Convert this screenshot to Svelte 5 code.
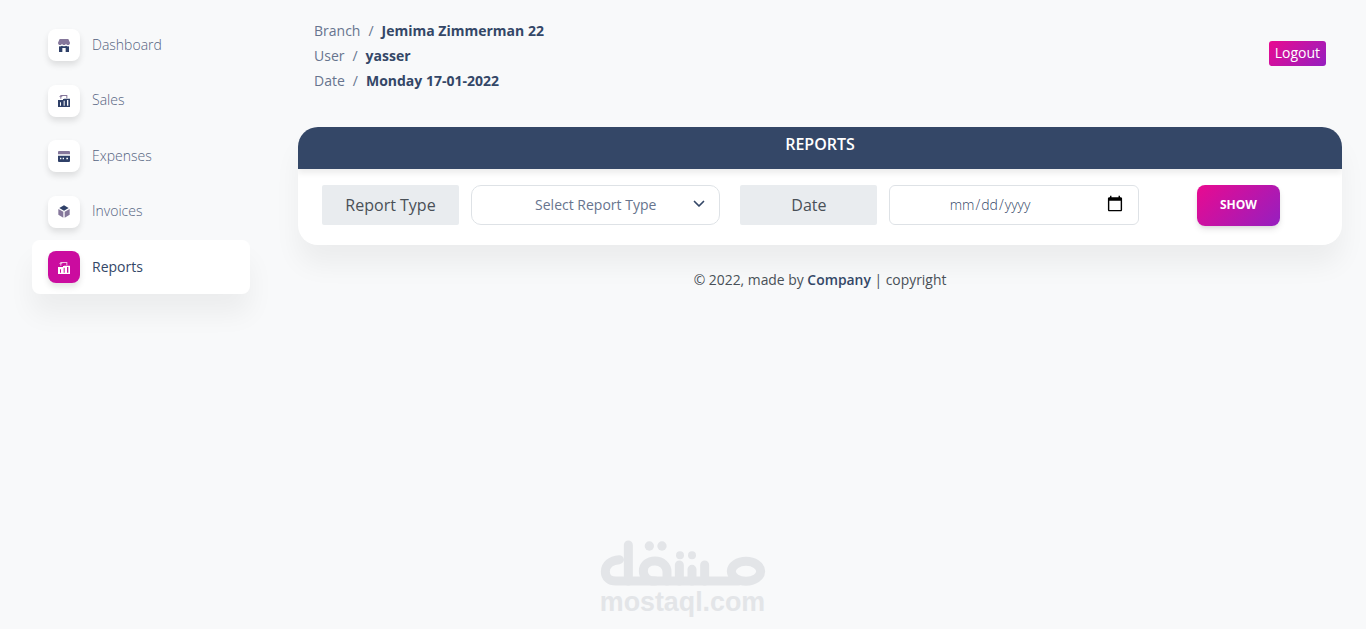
<script>
  const navItems = [
    { label: 'Dashboard', icon: 'shop' },
    { label: 'Sales', icon: 'chart' },
    { label: 'Expenses', icon: 'card' },
    { label: 'Invoices', icon: 'box' },
    { label: 'Reports', icon: 'chart', active: true }
  ];

  const crumbs = [
    { label: 'Branch', value: 'Jemima Zimmerman 22' },
    { label: 'User', value: 'yasser' },
    { label: 'Date', value: 'Monday 17-01-2022' }
  ];
</script>

<div class="page">
  <aside class="sidebar">
    <ul class="nav">
      {#each navItems as item}
        <li class="nav-item" class:active={item.active}>
          <span class="icon-box">
            <svg width="12" height="13" viewBox="0 0 36 39" fill="currentColor">
              {#if item.icon === 'shop'}
                <path class="soft" d="M5 0h26l5 11c0 5-3 7-6 7s-5-2-6-4c-1 2-3 4-6 4s-5-2-6-4c-1 2-3 4-6 4s-6-2-6-7z" />
                <path d="M3 22c3 1 6 0 9-2 3 2 9 2 12 0 3 2 6 3 9 2v17H23V27H13v12H3z" />
              {:else if item.icon === 'chart'}
                <path class="soft" d="M7 14V3h21v10h-3V6H10v8zM3 8l5.500-5 5.500 5z" />
                <path fill-rule="evenodd" d="M0 18h15v-3h3v-1h18v25H0zM6 25v10h3V25zM17 20v15h3V20zM27 18v17h4V18z" />
              {:else if item.icon === 'card'}
                <path class="soft" d="M3 3h30a3 3 0 0 1 3 3v7H0V6a3 3 0 0 1 3-3z" />
                <path fill-rule="evenodd" d="M0 17h36v16a3 3 0 0 1-3 3H3a3 3 0 0 1-3-3zM6 23v5h4v-5zM14 23v5h4v-5zM25 23v5h5v-5z" />
              {:else}
                <path d="M18 1l14 8-14 8-14-8z" />
                <path class="soft" d="M1 12l15 8.500V38L1 29.500zM35 12v17.500L20 38V20.500z" />
              {/if}
            </svg>
          </span>
          <span class="nav-text">{item.label}</span>
        </li>
      {/each}
    </ul>
  </aside>

  <main class="main">
    <header class="top">
      <div class="crumbs">
        {#each crumbs as c}
          <div class="crumb">
            <span>{c.label}</span><span class="slash">/</span><strong>{c.value}</strong>
          </div>
        {/each}
      </div>
      <button class="logout">Logout</button>
    </header>

    <section class="card">
      <h2 class="card-title">REPORTS</h2>
      <div class="card-body">
        <div class="group">
          <span class="group-label">Report Type</span>
          <div class="select-wrap">
            <select class="field">
              <option>Select Report Type</option>
            </select>
            <svg class="chevron" width="12" height="8" viewBox="0 0 12 8" fill="none" stroke="#344767" stroke-width="1.700" stroke-linecap="round" stroke-linejoin="round">
              <path d="M1.500 1.500L6 6l4.500-4.500" />
            </svg>
          </div>
        </div>
        <div class="group">
          <span class="group-label">Date</span>
          <input class="field date" type="date" />
        </div>
        <div class="action">
          <button class="show">SHOW</button>
        </div>
      </div>
    </section>

    <footer class="footer">© 2022, made by <strong>Company</strong> | copyright</footer>
  </main>

  <div class="watermark">
    <svg width="190" height="62" viewBox="0 0 570 186" fill="none" stroke="#e3e5e8" stroke-width="27" stroke-linecap="round" stroke-linejoin="round">
      <path d="M115 45v108H78c-20 0-32-12-32-28 0-20 16-34 42-36" />
      <path d="M115 153h330" />
      <path d="M195 153c-22 0-35-12-35-30s15-30 35-30 36 14 36 32v28" />
      <path d="M268 105v48M306 118v35M344 105v48" />
      <ellipse cx="468" cy="124" rx="44" ry="30" />
      <circle cx="178" cy="48" r="14" fill="#e3e5e8" stroke="none" />
      <circle cx="216" cy="48" r="14" fill="#e3e5e8" stroke="none" />
      <circle cx="270" cy="76" r="12" fill="#e3e5e8" stroke="none" />
      <circle cx="306" cy="76" r="12" fill="#e3e5e8" stroke="none" />
    </svg>
    <div class="wm-text">mostaql.com</div>
  </div>
</div>

<style>
  :global(body) {
    background: #f8f9fa;
    font-family: "Open Sans", sans-serif;
    color: #67748e;
  }

  .page {
    display: flex;
    min-height: 629px;
    overflow: hidden;
  }

  .sidebar {
    flex: 0 0 298px;
    padding: 18px 48px 0 32px;
    box-sizing: border-box;
  }

  .nav {
    list-style: none;
    margin: 0;
    padding: 0;
    display: flex;
    flex-direction: column;
    gap: 1.500px;
  }

  .nav-item {
    display: flex;
    align-items: center;
    gap: 12px;
    height: 54px;
    padding: 0 16px;
    border-radius: 8px;
    font-size: 14px;
    font-weight: 300;
    color: #55637f;
  }

  .nav-text {
    padding-bottom: 2px;
  }

  .nav-item.active {
    background: #fff;
    box-shadow: 0 20px 27px rgba(0, 0, 0, 0.05);
    color: #344767;
  }

  .nav-item.active .nav-text {
    font-weight: 400;
  }

  .icon-box {
    width: 32px;
    height: 32px;
    border-radius: 8px;
    background: #fff;
    color: #2f4068;
    display: flex;
    align-items: center;
    justify-content: center;
    box-shadow: 0 4px 6px rgba(0, 0, 0, 0.11);
  }

  .active .icon-box {
    background: #cb0c9f;
    color: #fff;
  }

  .soft {
    fill: #85779b;
  }

  .active .soft {
    fill: #f0c0e4;
  }

  .main {
    flex: 1;
    padding: 17.500px 24px 0 0;
    min-width: 0;
  }

  .top {
    display: flex;
    justify-content: space-between;
    align-items: flex-start;
    padding: 0 16px;
    height: 109.500px;
  }

  .crumb {
    font-size: 14px;
    line-height: 25px;
  }

  .crumb strong {
    font-weight: 700;
    color: #344767;
  }

  .slash {
    padding: 0 8px;
  }

  .logout {
    margin-top: 23.500px;
    height: 25px;
    padding: 0 6px 2px;
    border: 0;
    border-radius: 3px;
    background: linear-gradient(135deg, #e90a90, #951fc0);
    color: #fff;
    font: 400 14px "Open Sans", sans-serif;
  }

  .card {
    background: #fff;
    border-radius: 20px;
    box-shadow: 0 20px 27px rgba(0, 0, 0, 0.05);
    overflow: hidden;
  }

  .card-title {
    margin: 0;
    height: 42px;
    line-height: 34px;
    text-align: center;
    background: #344767;
    color: #fff;
    font-size: 16px;
    font-weight: 600;
    box-shadow: 0 4px 6px rgba(0, 0, 0, 0.08);
  }

  .card-body {
    display: flex;
    align-items: flex-start;
    gap: 20px;
    height: 76px;
    padding: 16px 24px 0;
    box-sizing: border-box;
  }

  .group {
    flex: 0 0 40%;
    min-width: 0;
    display: flex;
    gap: 12px;
  }

  .group-label {
    flex: 0 0 137px;
    height: 40px;
    line-height: 40px;
    text-align: center;
    background: #e9ecef;
    border-radius: 2px;
    color: #495057;
    font-size: 16px;
  }

  .select-wrap {
    position: relative;
    flex: 1;
    min-width: 0;
    display: flex;
  }

  .field {
    flex: 1;
    min-width: 0;
    width: 100%;
    height: 40px;
    box-sizing: border-box;
    border: 1px solid #dee2e6;
    border-radius: 6px;
    background: #fff;
    color: #495057;
    font: 400 14px "Open Sans", sans-serif;
    text-align: center;
    padding: 0 12px 2px;
  }

  select.field {
    appearance: none;
    color: #67748e;
    border-radius: 10px;
  }

  .date {
    font-weight: 300;
    color: #344767;
  }

  .date::-webkit-calendar-picker-indicator {
    width: 18px;
    height: 18px;
    margin-left: 28px;
    padding: 0;
    margin-right: 2px;
  }

  .chevron {
    position: absolute;
    right: 15px;
    top: 15px;
  }

  .action {
    flex: 1;
    display: flex;
    justify-content: center;
  }

  .show {
    width: 83px;
    height: 41px;
    padding: 0 0 2px;
    border: 0;
    border-radius: 8px;
    background: linear-gradient(135deg, #e90a90, #951fc0);
    color: #fff;
    font: 700 12px "Open Sans", sans-serif;
    box-shadow: 0 4px 7px -1px rgba(0, 0, 0, 0.11), 0 2px 4px -1px rgba(0, 0, 0, 0.07);
  }

  .footer {
    margin-top: 26px;
    text-align: center;
    font-size: 13.900px;
    line-height: 17px;
    color: #495057;
  }

  .footer strong {
    font-weight: 600;
    color: #344767;
  }

  .watermark {
    position: absolute;
    left: 590px;
    top: 530px;
    width: 190px;
    text-align: center;
  }

  .wm-text {
    margin-top: -10px;
    padding-right: 5px;
    font: 700 26.800px/30px "Liberation Sans", sans-serif;
    color: #e3e5e8;
  }
</style>
